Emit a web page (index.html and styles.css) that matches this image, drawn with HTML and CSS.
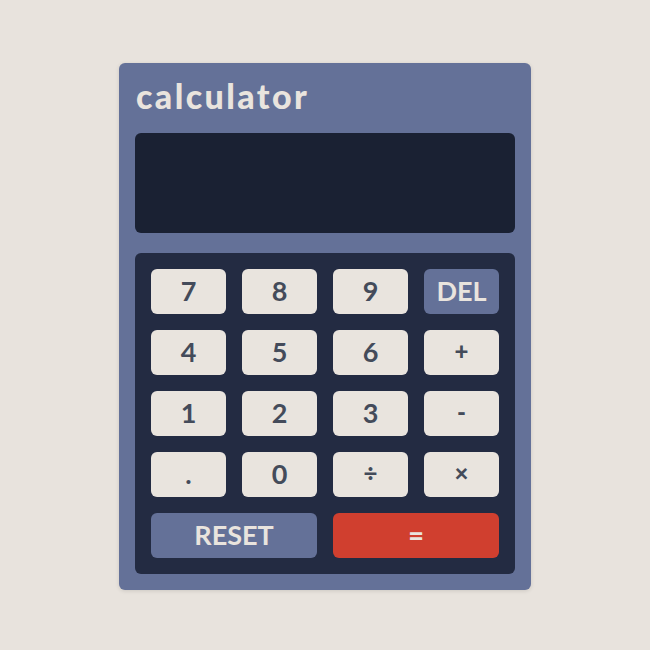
FILE: index.html
```html
<!DOCTYPE html>
<html lang="en">
<head>
<meta charset="utf-8">
<title>calculator</title>
<link rel="stylesheet" href="styles.css">
</head>
<body>
<main class="calc">
  <h1 class="title">calculator</h1>
  <div class="screen"></div>
  <div class="keypad">
    <button class="key">7</button>
    <button class="key">8</button>
    <button class="key">9</button>
    <button class="key key-del">DEL</button>
    <button class="key">4</button>
    <button class="key">5</button>
    <button class="key">6</button>
    <button class="key key-op">+</button>
    <button class="key">1</button>
    <button class="key">2</button>
    <button class="key">3</button>
    <button class="key key-op">-</button>
    <button class="key">.</button>
    <button class="key">0</button>
    <button class="key key-op">÷</button>
    <button class="key key-op">×</button>
    <button class="key key-del key-wide">RESET</button>
    <button class="key key-eq key-wide">=</button>
  </div>
</main>
</body>
</html>
```
FILE: styles.css
```css
html, body {
  margin: 0;
  padding: 0;
}
body {
  background: #e8e3dd;
  width: 650px;
  height: 650px;
  display: flex;
  justify-content: center;
  align-items: flex-start;
  font-family: Lato, "Noto Sans", sans-serif;
}
.calc {
  margin-top: 63px;
  width: 412px;
  box-sizing: border-box;
  padding: 16px;
  background: #647198;
  border-radius: 6px;
  box-shadow: 0 1px 4px rgba(0, 0, 0, 0.12);
  display: flex;
  flex-direction: column;
}
.title {
  margin: 0;
  height: 34px;
  line-height: 34px;
  font-size: 34px;
  font-weight: 900;
  color: #e9e4de;
  letter-spacing: 2.4px;
  padding-left: 1px;
}
.screen {
  margin-top: 20px;
  height: 100px;
  background: #1a2133;
  border-radius: 6px;
}
.keypad {
  margin-top: 20px;
  background: #232b42;
  border-radius: 6px;
  padding: 16px;
  display: grid;
  grid-template-columns: repeat(4, 75px);
  grid-auto-rows: 45px;
  gap: 16px;
}
.key {
  border: none;
  border-radius: 6px;
  background: #e9e4de;
  color: #444b5a;
  font-family: Lato, "Noto Sans", sans-serif;
  font-weight: 700;
  font-size: 27px;
  padding: 0 0 3px;
  line-height: 1;
  display: flex;
  align-items: center;
  justify-content: center;
}
.key-op {
  font-size: 24px;
  font-weight: 900;
}
.key-del {
  background: #647198;
  color: #e9e4de;
}
.key-wide {
  grid-column: span 2;
}
.key-eq {
  background: #d03f2f;
  color: #e9e4de;
  font-weight: 900;
}
```
